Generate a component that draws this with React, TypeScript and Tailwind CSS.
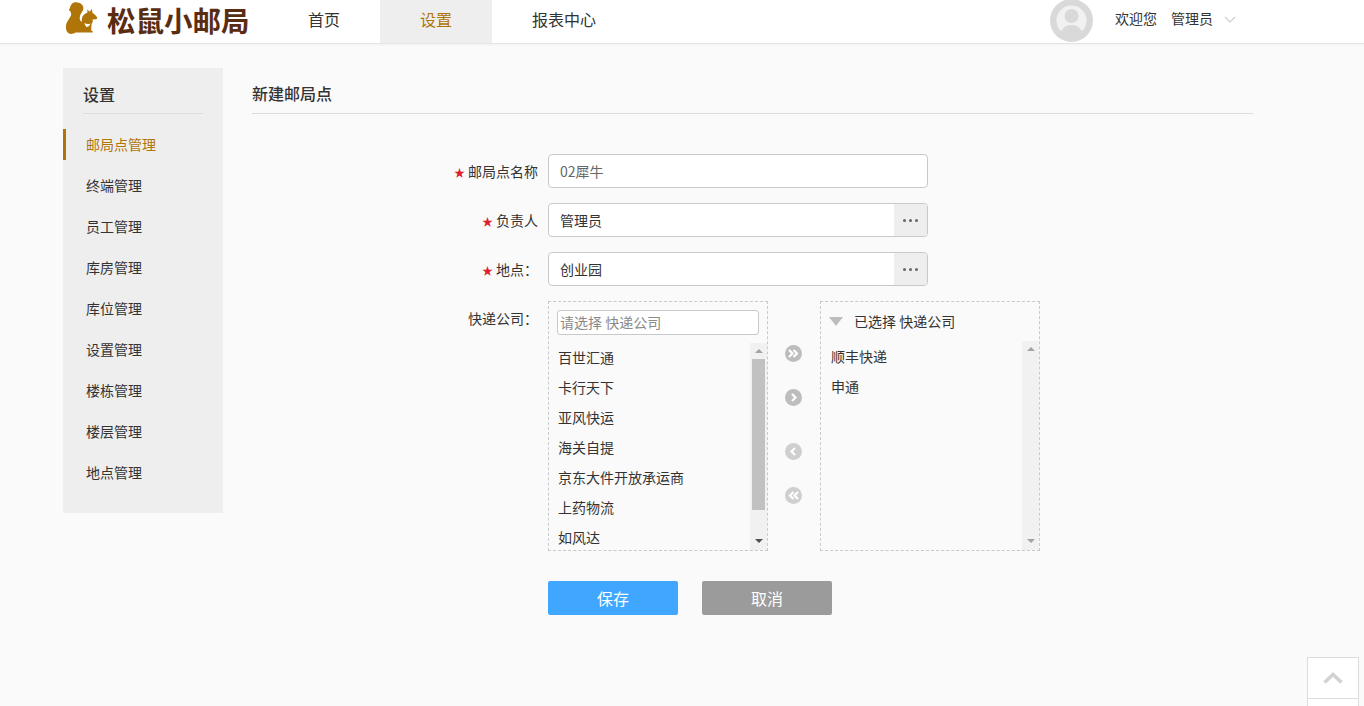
const font = { fontFamily: '"Noto Sans CJK SC", "Noto Sans", sans-serif' };

const sideItems = ["邮局点管理", "终端管理", "员工管理", "库房管理", "库位管理", "设置管理", "楼栋管理", "楼层管理", "地点管理"];
const leftList = ["百世汇通", "卡行天下", "亚风快运", "海关自提", "京东大件开放承运商", "上药物流", "如风达"];
const rightList = ["顺丰快递", "申通"];

const Squirrel = () => (
  <svg width="33" height="34" viewBox="0 0 33 34" className="shrink-0">
    <path
      fill="#b07508"
      d="M9 0.500c3.500-.6 7 .6 8.600 3 1.300 2 .8 4.300-.5 6.300-1.500 2.400-2.700 4.600-2.300 7.300.3 1.800 1.300 2.700 2.200 2.300-.7-2.600.3-5.600 2.700-7.400.8-.6 1.700-1 2.600-1.200l.1-3.300 2.100 2.200 2.400-2.700.6 4c1.800.9 3.300 2.400 4.500 4.200.6 1-.1 1.900-1.300 2l-3.200.2c.5 1.400.3 3-.8 4.300-.4 2.500-.4 4.900-.5 6.800 1.200.1 1.800.8 1.500 2H10.500C5 34 1 30.400.9 25.400.8 21 3.500 18 5.500 14.600 6.700 12.500 6.300 10.200 4.500 8.500 3.700 7.700 3.800 6.800 4.700 6.800 5.400 3.600 6.800 1.200 9 .5Z"
    />
    <path fill="#fff" d="M19.500 21c1.800 1.300 4 1.400 6 .4-.7 2-2 3.300-4 3.600-1-1-1.700-2.400-2-4Z" />
  </svg>
);

const Dots = () => (
  <div className="w-[33px] h-full bg-[#eeeeee] rounded-r-[3px] flex items-center justify-center gap-[3px]">
    <span className="w-[3px] h-[3px] rounded-full bg-[#666666]" />
    <span className="w-[3px] h-[3px] rounded-full bg-[#666666]" />
    <span className="w-[3px] h-[3px] rounded-full bg-[#666666]" />
  </div>
);

const Field = ({ label, required, value, more, gray }: { label: string; required?: boolean; value: string; more?: boolean; gray?: boolean }) => (
  <div className="flex h-[34px] mb-[15px]">
    <div className="w-[285px] flex items-center justify-end text-[14px] text-[#333333]">
      {required && <span className="text-[#e0202a] mr-[3px] mt-[2px] text-[11px] leading-none">★</span>}
      {label}
    </div>
    <div className="ml-[10px] w-[380px] h-full bg-white border border-[#c9c9c9] rounded-[4px] flex items-center">
      <span className={`flex-1 pl-[11px] text-[14px] ${gray ? "text-[#666666]" : "text-[#333333]"}`}>{value}</span>
      {more && <Dots />}
    </div>
  </div>
);

const ScrollTrack = ({ thumb, dark }: { thumb?: boolean; dark?: boolean }) => (
  <div className="w-[17px] h-full bg-[#f1f1f1] flex flex-col items-center relative">
    <div className="mt-[6px] w-0 h-0 border-x-[4px] border-x-transparent border-b-[4px] border-b-[#a3a3a3]" />
    {thumb && <div className="mt-[6px] w-[13px] h-[151px] bg-[#c1c1c1]" />}
    <div className={`mt-auto mb-[7px] w-0 h-0 border-x-[4px] border-x-transparent border-t-[4px] ${dark ? "border-t-[#505050]" : "border-t-[#a3a3a3]"}`} />
  </div>
);

const Arrow = ({ d, color, className }: { d: string; color: string; className: string }) => (
  <svg width="17" height="17" viewBox="0 0 17 17" className={className}>
    <circle cx="8.500" cy="8.500" r="8.500" fill={color} />
    <path d={d} fill="none" stroke="#fff" strokeWidth="2.200" />
  </svg>
);

export default function App() {
  return (
    <div className="relative w-[1364px] h-[706px] overflow-hidden bg-[#fafafa]" style={font}>
      <header className="h-[44px] bg-white border-b border-[#e4e4e4] flex shadow-[0_1px_2px_rgba(0,0,0,0.04)]">
        <div className="w-[268px] pl-[65px] flex items-center h-[37px] gap-[9px]">
          <Squirrel />
          <span className="mt-[3px] text-[28.500px] leading-[34px] font-bold text-[#5a2d12] whitespace-nowrap">松鼠小邮局</span>
        </div>
        <nav className="flex h-[43px] text-[16px] leading-[38px] text-[#333333]">
          <a className="px-[40px]">首页</a>
          <a className="px-[40px] bg-[#eeeeee] text-[#b07508]">设置</a>
          <a className="px-[40px]">报表中心</a>
        </nav>
        <div className="ml-auto mr-[128px] flex items-center h-[40px] text-[14px] text-[#333333]">
          <svg width="43" height="43" viewBox="0 0 43 43" className="mr-[22px]">
            <circle cx="21.500" cy="21.500" r="21.500" fill="#d9d9d9" />
            <circle cx="21.500" cy="21.500" r="15" fill="#f1f1f1" />
            <circle cx="21.500" cy="17" r="7" fill="#d9d9d9" />
            <path d="M10 37c1-8 6-11 11.500-11S32 29 33 37a21 21 0 0 1-23 0Z" fill="#d9d9d9" />
          </svg>
          <span className="-mt-[4px]">欢迎您</span>
          <span className="ml-[14px] -mt-[4px]">管理员</span>
          <svg width="12" height="8" viewBox="0 0 12 8" className="ml-[11px]">
            <path d="M1 1l5 5 5-5" fill="none" stroke="#cfcfcf" strokeWidth="1.200" />
          </svg>
        </div>
      </header>

      <div className="flex pl-[63px] pt-[24px]">
        <aside className="w-[160px] h-[445px] bg-[#eeeeee]">
          <div className="mx-[20px] h-[46px] border-b border-[#dddddd] text-[16px] leading-[53px] font-medium text-[#333333]">设置</div>
          <ul className="mt-[15px]">
            {sideItems.map((item, i) => (
              <li
                key={item}
                className={`h-[31px] mb-[10px] pl-[20px] text-[14px] leading-[30px] border-l-[3px] ${
                  i === 0 ? "border-[#b07508] text-[#b07508]" : "border-transparent text-[#333333]"
                }`}
              >
                {item}
              </li>
            ))}
          </ul>
        </aside>

        <main className="ml-[29px] w-[1001px]">
          <div className="h-[46px] border-b border-[#dddddd] text-[16px] leading-[50px] font-medium text-[#333333]">新建邮局点</div>

          <div className="mt-[40px] pl-[1px]">
            <Field label="邮局点名称" required value="02犀牛" gray />
            <Field label="负责人" required value="管理员" more />
            <Field label="地点：" required value="创业园" more />

            <div className="flex">
              <div className="w-[285px] pt-[6px] text-right text-[14px] text-[#333333] leading-[22px]">快递公司：</div>
              <div className="ml-[10px] w-[220px] h-[250px] border border-dashed border-[#c9c9c9] flex flex-col">
                <div className="h-[41px] pl-[8px] pt-[8px]">
                  <div className="w-[202px] h-[25px] bg-white border border-[#c9c9c9] rounded-[3px] pl-[2px] text-[14px] leading-[23px] text-[#8a8a8a]">请选择 快递公司</div>
                </div>
                <div className="flex-1 min-h-0 flex">
                  <ul className="flex-1 pl-[9px] text-[14px] text-[#333333]">
                    {leftList.map((c) => (
                      <li key={c} className="h-[30px] leading-[29px]">{c}</li>
                    ))}
                  </ul>
                  <ScrollTrack thumb dark />
                </div>
              </div>

              <div className="w-[51px] mr-[1px] flex flex-col items-center">
                <Arrow color="#bdbdbd" className="mt-[44px]" d="M4 5l3.500 3.500L4 12M8.500 5l3.500 3.500L8.500 12" />
                <Arrow color="#bdbdbd" className="mt-[27px]" d="M7 5l3.500 3.500L7 12" />
                <Arrow color="#cfcfcf" className="mt-[37px]" d="M10 5L6.500 8.500 10 12" />
                <Arrow color="#cfcfcf" className="mt-[27px]" d="M8.500 5L5 8.500 8.500 12M13 5L9.500 8.500 13 12" />
              </div>

              <div className="w-[220px] h-[250px] border border-dashed border-[#c9c9c9] flex flex-col">
                <div className="h-[39px] pl-[8px] flex items-center">
                  <div className="w-0 h-0 border-x-[7.500px] border-x-transparent border-t-[9px] border-t-[#bdbdbd]" />
                  <span className="ml-[11px] text-[14px] text-[#333333]">已选择 快递公司</span>
                </div>
                <div className="flex-1 min-h-0 flex">
                  <ul className="flex-1 pl-[10px] text-[14px] text-[#333333]">
                    {rightList.map((c) => (
                      <li key={c} className="h-[30px] leading-[30px]">{c}</li>
                    ))}
                  </ul>
                  <ScrollTrack />
                </div>
              </div>
            </div>

            <div className="mt-[30px] ml-[295px] flex gap-[24px] text-[16px] text-white">
              <button className="w-[130px] h-[34px] rounded-[2px] bg-[#3fa7ff]">保存</button>
              <button className="w-[130px] h-[34px] rounded-[2px] bg-[#9b9b9b]">取消</button>
            </div>
          </div>
        </main>
      </div>

      <div className="absolute left-[1307px] top-[657px] w-[52px] h-[60px] bg-white border border-[#dddddd]">
        <div className="h-[41px] border-b border-[#dddddd] flex items-center justify-center">
          <svg width="20" height="12" viewBox="0 0 20 12">
            <path d="M1.500 10.500L10 2.500l8.500 8" fill="none" stroke="#d2d2d2" strokeWidth="3.500" />
          </svg>
        </div>
      </div>
    </div>
  );
}
